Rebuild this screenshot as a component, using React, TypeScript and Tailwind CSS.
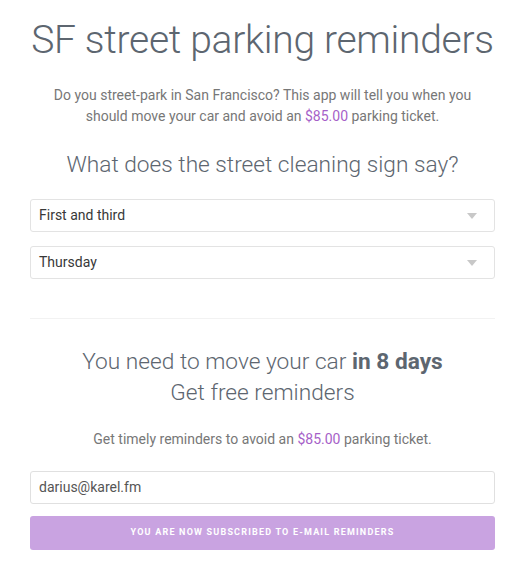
import React from "react";

function Caret() {
  return (
    <svg width="10" height="6" viewBox="0 0 10 6" className="shrink-0">
      <path d="M0 0 L10 0 L5 6 Z" fill="#c8c8c8" />
    </svg>
  );
}

function SelectBox({ label }: { label: string }) {
  return (
    <div className="flex h-[33px] items-center justify-between rounded-[3px] border border-[#e3e3e3] bg-white pl-[8px] pr-[17px] text-[14px] text-[#383838]">
      <span>{label}</span>
      <Caret />
    </div>
  );
}

export default function App() {
  return (
    <div
      className="min-h-[573px] w-full bg-white text-[#5d6670]"
      style={{ fontFamily: "Roboto, 'Liberation Sans', sans-serif" }}
    >
      <div className="mx-auto flex w-[465px] -translate-x-[1px] flex-col pt-[16px]">
        <h1 className="-mx-4 whitespace-nowrap text-center text-[39px] font-light leading-[48px] tracking-[-0.3px] text-[#5d6670]">
          SF street parking reminders
        </h1>
        <p className="mt-[21px] text-center text-[14px] leading-[21px] text-[#777]">
          Do you street-park in San Francisco? This app will tell you when you
          <br />
          should move your car and avoid an{" "}
          <span className="text-[#a65fc8]">$85.00</span> parking ticket.
        </p>
        <h2 className="mt-[22px] text-center text-[22.7px] font-light leading-[32px] text-[#5d6670]">
          What does the street cleaning sign say?
        </h2>
        <div className="mt-[18px] flex flex-col gap-[14px]">
          <SelectBox label="First and third" />
          <SelectBox label="Thursday" />
        </div>
        <div className="mt-[39px] h-px bg-[#f2f2f2]" />
        <h2 className="mt-[27px] text-center text-[22.7px] font-light leading-[31px] text-[#5d6670]">
          You need to move your car <span className="font-bold">in 8 days</span>
          <br />
          Get free reminders
        </h2>
        <p className="mt-[21px] text-center text-[14px] leading-[20px] text-[#777]">
          Get timely reminders to avoid an{" "}
          <span className="text-[#a65fc8]">$85.00</span> parking ticket.
        </p>
        <div className="mt-[22px] flex h-[33px] items-center rounded-[3px] border border-[#e0e0e0] bg-white pl-[8px] text-[14px] text-[#555]">
          darius@karel.fm
        </div>
        <div className="mt-[12px] flex h-[34px] items-center justify-center rounded-[3px] bg-[#c9a3e1] text-[9px] font-bold uppercase tracking-[1.2px] text-white">
          You are now subscribed to e-mail reminders
        </div>
      </div>
    </div>
  );
}
